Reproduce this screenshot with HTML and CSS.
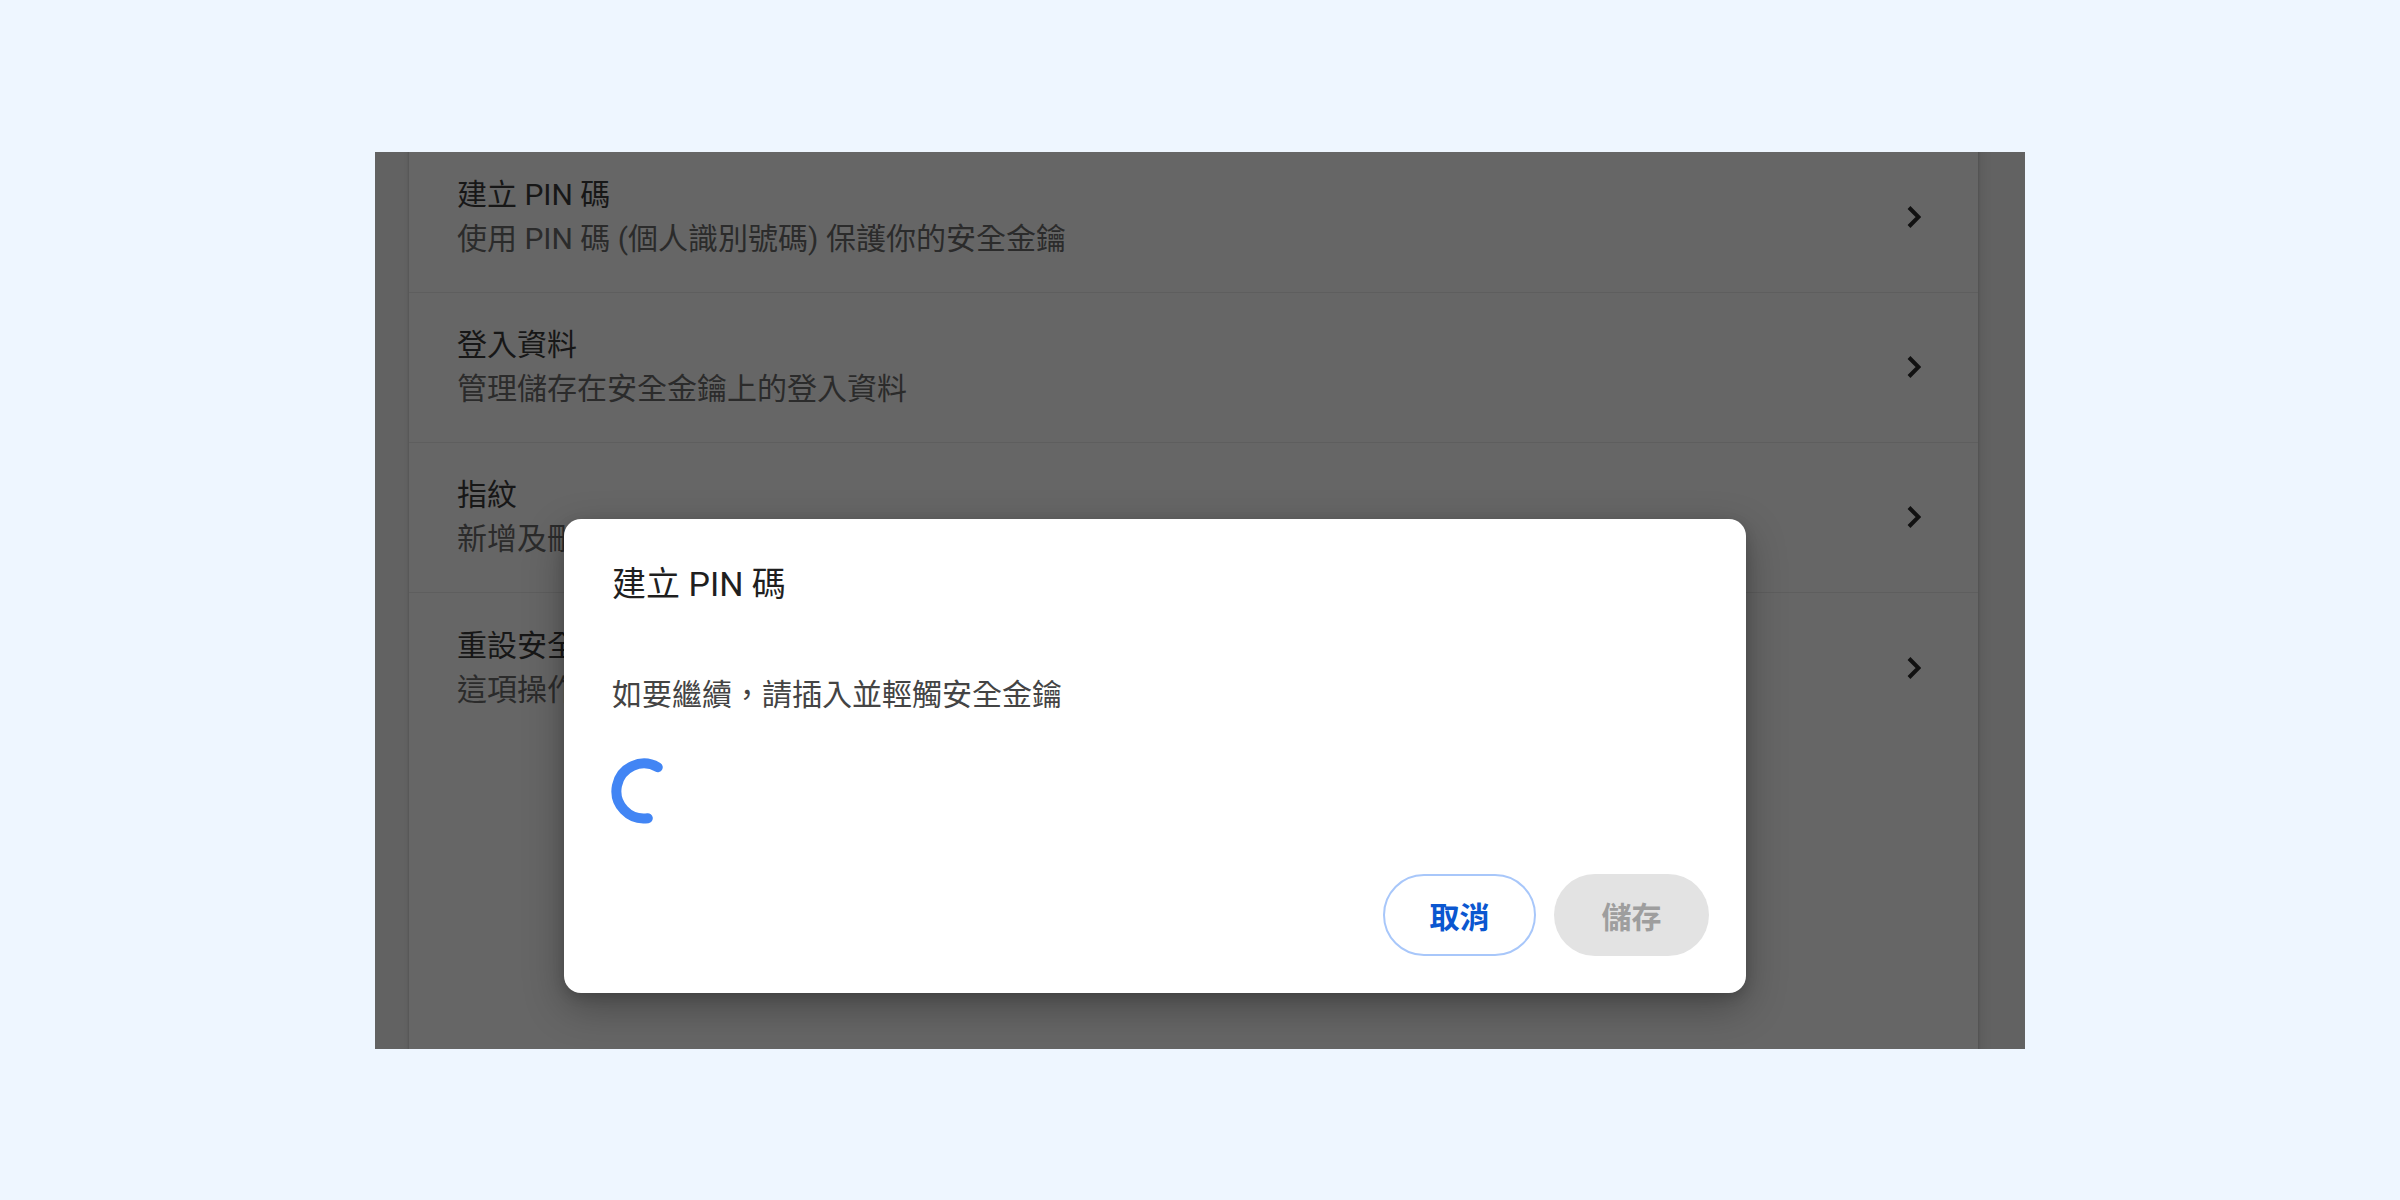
FILE: index.html
```html
<!DOCTYPE html>
<html lang="zh-Hant">
<head>
<meta charset="utf-8">
<title>建立 PIN 碼</title>
<link rel="stylesheet" href="styles.css">
</head>
<body>
<div class="panel">
  <div class="card">
    <div class="row">
      <div class="text">
        <div class="title">建立 PIN 碼</div>
        <div class="sub">使用 PIN 碼 (個人識別號碼) 保護你的安全金鑰</div>
      </div>
      <svg class="chev" width="14" height="22" viewBox="0 0 14 22"><path d="M2 1.5 L11.5 11 L2 20.5" fill="none" stroke="#111" stroke-width="4"/></svg>
    </div>
    <div class="row">
      <div class="text">
        <div class="title">登入資料</div>
        <div class="sub">管理儲存在安全金鑰上的登入資料</div>
      </div>
      <svg class="chev" width="14" height="22" viewBox="0 0 14 22"><path d="M2 1.5 L11.5 11 L2 20.5" fill="none" stroke="#111" stroke-width="4"/></svg>
    </div>
    <div class="row">
      <div class="text">
        <div class="title">指紋</div>
        <div class="sub">新增及刪除儲存在安全金鑰上的指紋</div>
      </div>
      <svg class="chev" width="14" height="22" viewBox="0 0 14 22"><path d="M2 1.5 L11.5 11 L2 20.5" fill="none" stroke="#111" stroke-width="4"/></svg>
    </div>
    <div class="row">
      <div class="text">
        <div class="title">重設安全金鑰</div>
        <div class="sub">這項操作會刪除安全金鑰上的所有資料，包括 PIN 碼</div>
      </div>
      <svg class="chev" width="14" height="22" viewBox="0 0 14 22"><path d="M2 1.5 L11.5 11 L2 20.5" fill="none" stroke="#111" stroke-width="4"/></svg>
    </div>
  </div>

  <div class="dialog">
    <div class="d-title">建立 PIN 碼</div>
    <div class="d-body">如要繼續<span class="punct">，</span>請插入並輕觸安全金鑰</div>
    <svg class="spinner" width="66" height="66" viewBox="0 0 66 66"><path d="M46.75 9.2 A27.5 27.5 0 1 0 36.8 60.2" fill="none" stroke="#4285f4" stroke-width="10" stroke-linecap="round"/></svg>
    <div class="actions">
      <button class="btn cancel">取消</button>
      <button class="btn save">儲存</button>
    </div>
  </div>
</div>
</body>
</html>
```

FILE: styles.css
```css
html, body {
  margin: 0;
  padding: 0;
}

body {
  background: #eef6ff;
  height: 100vh;
  display: flex;
  align-items: center;
  justify-content: center;
  font-family: Roboto, "Noto Sans CJK TC", sans-serif;
}

.panel {
  position: relative;
  width: 1650px;
  height: 897px;
  background: #626262;
  overflow: hidden;
}

.card {
  margin: -9px 0 0 34px;
  width: 1569px;
  height: 940px;
  background: #666666;
  box-shadow: 0 0 2px 1px rgba(0, 0, 0, 0.12), 4px 0 10px rgba(0, 0, 0, 0.08);
}

.row {
  box-sizing: border-box;
  height: 150px;
  padding: 0 57px 0 48px;
  display: flex;
  align-items: center;
  justify-content: space-between;
  border-bottom: 1px solid rgba(0, 0, 0, 0.07);
}

.row:last-child {
  border-bottom: none;
}

.title {
  font-size: 30px;
  line-height: 44px;
  color: #171717;
}

.sub {
  font-size: 30px;
  line-height: 44px;
  color: #2b2b2b;
}

.chev {
  display: block;
  flex: none;
}

.dialog {
  position: absolute;
  left: 189px;
  top: 367px;
  width: 1182px;
  height: 474px;
  box-sizing: border-box;
  background: #ffffff;
  border-radius: 17px;
  padding: 42px 37px 37px 48px;
  display: flex;
  flex-direction: column;
  box-shadow: 0 14px 40px rgba(0, 0, 0, 0.3), 0 4px 12px rgba(0, 0, 0, 0.15);
}

.d-title {
  font-size: 34px;
  line-height: 46px;
  color: #1f1f1f;
}

.d-body {
  margin-top: 65px;
  font-size: 30px;
  line-height: 40px;
  color: #444444;
}

.punct {
  font-family: "Noto Sans CJK SC", sans-serif;
}

.spinner {
  display: block;
  margin-top: 43px;
  margin-left: -1px;
}

.actions {
  margin-top: auto;
  display: flex;
  justify-content: flex-end;
  gap: 18px;
}

.btn {
  height: 82px;
  border-radius: 41px;
  font-family: Roboto, "Noto Sans CJK TC", sans-serif;
  font-size: 30px;
  font-weight: 700;
  padding: 0;
  box-sizing: border-box;
}

.cancel {
  width: 153px;
  background: #ffffff;
  color: #0b57d0;
  border: 2px solid #a8c7fa;
}

.save {
  width: 155px;
  background: #e3e3e3;
  color: #9e9e9e;
  border: none;
}
```
